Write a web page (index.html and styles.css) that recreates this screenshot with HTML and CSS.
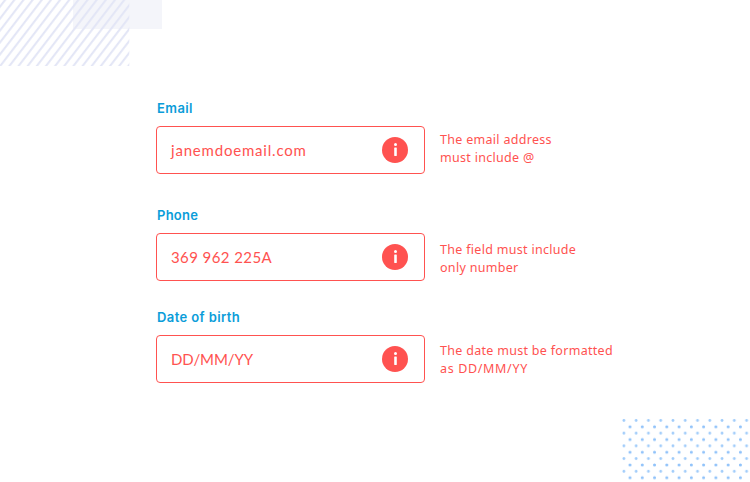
FILE: index.html
```html
<!DOCTYPE html>
<html lang="en">
<head>
<meta charset="utf-8">
<title>Form validation</title>
<link rel="stylesheet" href="styles.css">
</head>
<body>
<svg class="stripes" width="170" height="70" aria-hidden="true">
  <defs>
    <pattern id="hatch" width="9.15" height="66" patternUnits="userSpaceOnUse" patternTransform="translate(0 66) skewX(-37.5)">
      <rect x="0" width="1.5" height="66" fill="#e3e6f6"/>
      <rect x="8.05" width="1.1" height="66" fill="#e3e6f6"/>
    </pattern>
  </defs>
  <rect x="73" width="89" height="29" fill="#f4f5fa"/>
  <rect width="129.3" height="66" fill="url(#hatch)"/>
</svg>
<svg class="dots" width="128" height="64" aria-hidden="true">
  <defs>
    <pattern id="dot" width="12.27" height="12.72" patternUnits="userSpaceOnUse">
      <circle cx="1.9" cy="2.4" r="1.4" fill="#9fcbfa"/>
      <circle cx="8" cy="8.8" r="1.5" fill="#8fc2fa"/>
    </pattern>
  </defs>
  <rect width="128" height="62" fill="url(#dot)"/>
</svg>
<svg class="symbols" aria-hidden="true">
  <symbol id="info" viewBox="0 0 26 26">
    <circle cx="13" cy="13" r="13" fill="#ff5250"/>
    <circle cx="13.5" cy="7.5" r="1.5" fill="#fff"/>
    <rect x="12.2" y="10.5" width="2.6" height="8.5" rx=".4" fill="#fff"/>
  </symbol>
</svg>
<form class="form">
  <div class="field email">
    <label class="label">Email</label>
    <div class="row">
      <div class="control"><span class="value">janemdoemail.com</span><svg class="icon"><use href="#info"/></svg></div>
      <p class="error">The email address<br>must include @</p>
    </div>
  </div>
  <div class="field phone">
    <label class="label">Phone</label>
    <div class="row">
      <div class="control"><span class="value">369 962 225A</span><svg class="icon"><use href="#info"/></svg></div>
      <p class="error">The field must include<br>only number</p>
    </div>
  </div>
  <div class="field birth">
    <label class="label">Date of birth</label>
    <div class="row">
      <div class="control"><span class="value">DD/MM/YY</span><svg class="icon"><use href="#info"/></svg></div>
      <p class="error">The date must be formatted<br><span class="format">as DD/MM/YY</span></p>
    </div>
  </div>
</form>
</body>
</html>
```
FILE: styles.css
```css
* { box-sizing: border-box; }
body { margin: 0; width: 750px; height: 482px; overflow: hidden; background: #fff; position: relative; }
.stripes { position: absolute; left: 0; top: 0; }
.dots { position: absolute; left: 622px; top: 418px; }
.symbols { position: absolute; width: 0; height: 0; }
.form { padding: 100px 0 0 156px; }
.field { height: 74px; }
.phone { margin-top: 33px; }
.birth { margin-top: 28px; }
.label { display: block; height: 26px; padding-left: 1px; font: 600 13px/17px Inter, sans-serif; letter-spacing: .4px; color: #0b9dd9; }
.phone .label { letter-spacing: .25px; }
.row { display: flex; align-items: center; gap: 15px; height: 48px; }
.control { display: flex; align-items: center; justify-content: space-between; width: 269px; height: 48px; padding: 0 16px 0 14px; border: 1px solid #ff5250; border-radius: 4px; }
.value { font: 400 15px/20px Lato, sans-serif; color: #ff5250; white-space: nowrap; letter-spacing: .8px; }
.phone .value { letter-spacing: .42px; }
.birth .value { letter-spacing: -.1px; }
.icon { width: 26px; height: 26px; }
.error { margin: 0; padding-bottom: 2px; font: 400 12.5px/18px "Noto Sans", sans-serif; color: #ff5250; white-space: nowrap; letter-spacing: .3px; }
.phone .error { padding: 4px 0 0; }
.birth .error { padding: 2px 0 0; }
.format { letter-spacing: .66px; }
```
